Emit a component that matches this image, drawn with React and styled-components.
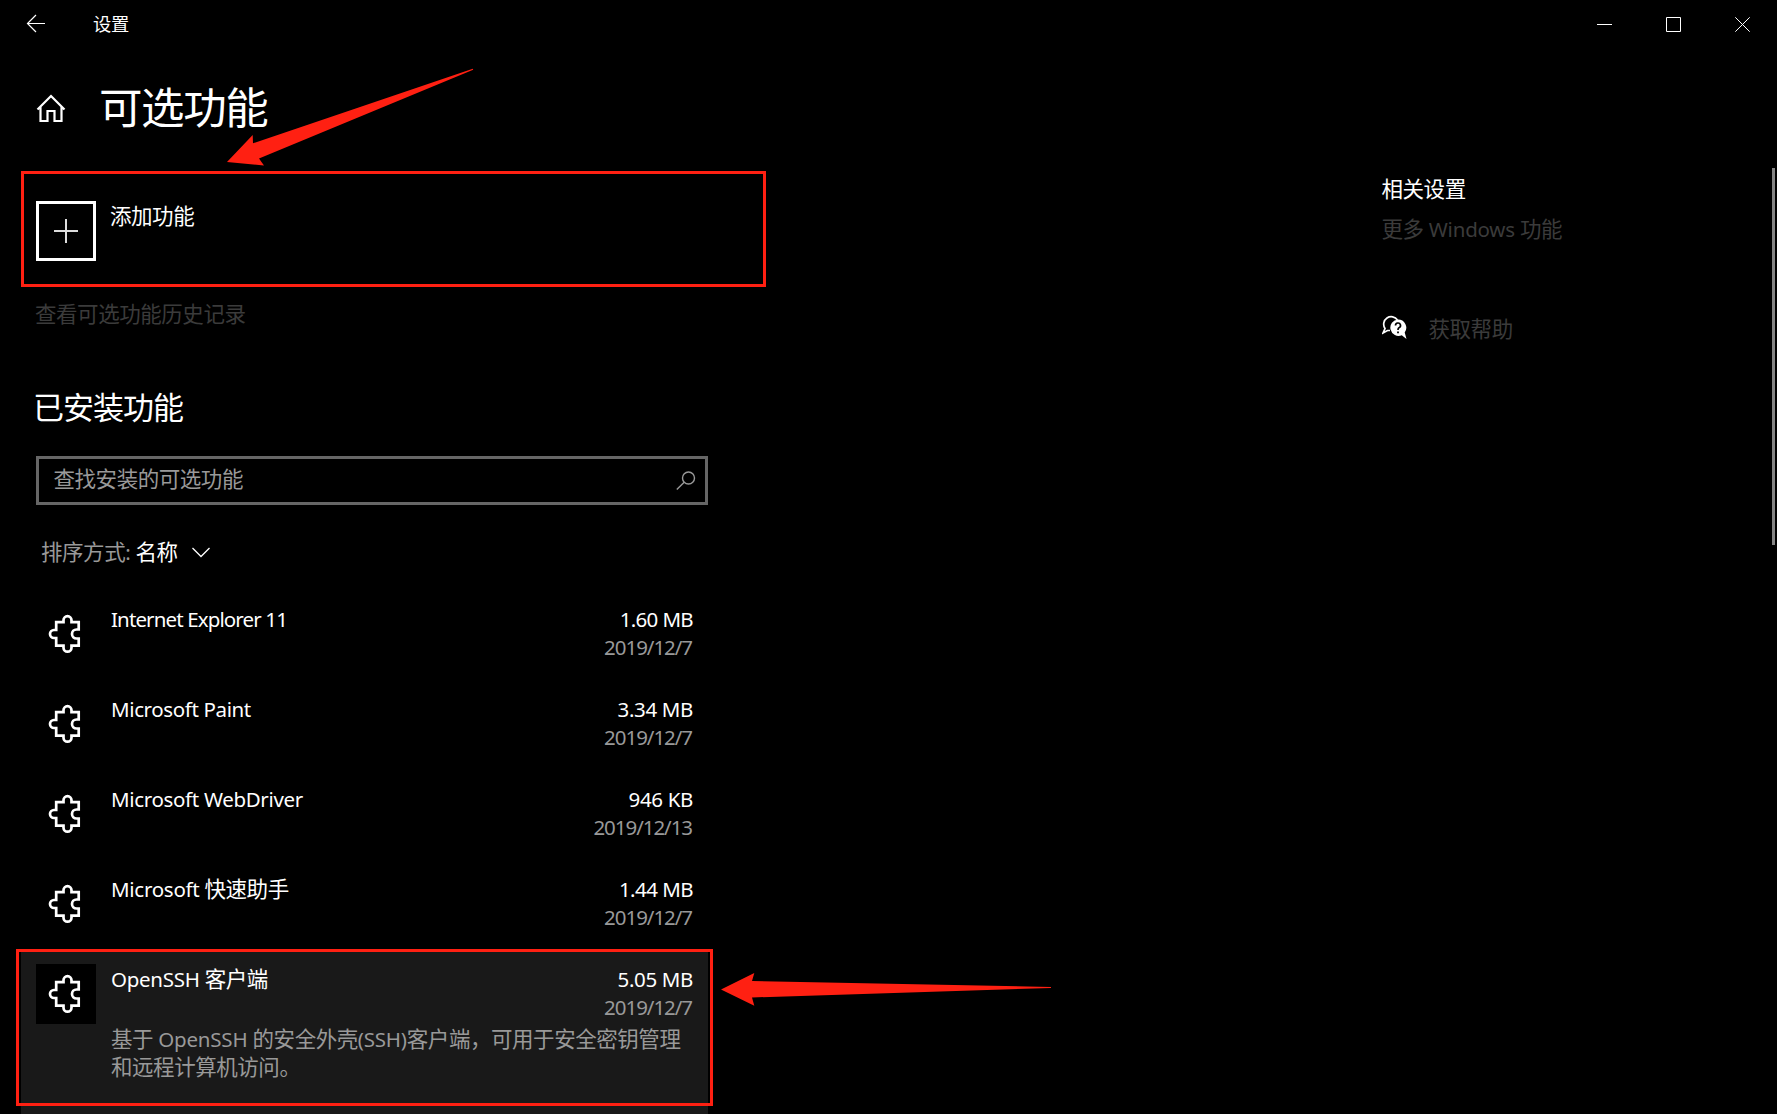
import React from "react";
import styled, { createGlobalStyle } from "styled-components";

const GlobalStyle = createGlobalStyle`
  * { box-sizing: border-box; }
  html, body { margin: 0; background: #000; overflow: hidden; }
  body {
    font-family: "Noto Sans", "Noto Sans CJK SC", sans-serif;
    font-size: 21.5px;
    letter-spacing: -0.45px;
    line-height: 28px;
    color: #fff;
  }
`;

const Window = styled.div`
  position: relative;
  width: 1777px;
  height: 1114px;
  overflow: hidden;
  background: #000;
`;

const TitleBar = styled.header`
  display: flex;
  align-items: center;
  height: 48px;
  padding-left: 26px;
`;

const AppName = styled.span`
  flex: 1;
  margin-left: 47px;
  font-size: 18.3px;
  letter-spacing: -0.2px;
`;

const CaptionButton = styled.button`
  display: flex;
  align-items: center;
  justify-content: center;
  width: 69px;
  height: 48px;
  padding: 0;
  border: 0;
  background: none;
`;

const Header = styled.div`
  display: flex;
  align-items: center;
  height: 120px;
  padding: 1px 0 0 36px;
`;

const PageTitle = styled.h1`
  margin: -4px 0 0 32px;
  font-size: 43.5px;
  font-weight: 400;
  letter-spacing: -1.4px;
  line-height: 56px;
`;

const Columns = styled.main`
  display: flex;
  align-items: flex-start;
  height: 946px;
`;

const Content = styled.section`
  width: 766px;
  padding-left: 21px;
`;

const Related = styled.aside`
  display: flex;
  flex-direction: column;
  flex: 1;
  margin-left: 615.5px;
  padding-top: 7px;
`;

const RelatedTitle = styled.h2`
  margin: 0 0 12px;
  font-size: 21.5px;
  font-weight: 400;
  line-height: 28px;
`;

const Link = styled.a`
  color: #3b3b3b;
`;

const HelpRow = styled.div`
  display: flex;
  align-items: flex-start;
  gap: 22px;
  margin: 72px 0 0;
`;

const ScrollThumb = styled.div`
  width: 3px;
  height: 377px;
  margin-right: 2px;
  background: #858585;
`;

const AddFeature = styled.div`
  display: flex;
  gap: 14px;
  width: 745px;
  height: 116px;
  margin-top: 3px;
  padding: 27px 12px;
  border: 3px solid #ff2012;
`;

const AddTile = styled.div`
  display: flex;
  align-items: center;
  justify-content: center;
  width: 60px;
  height: 60px;
  border: 3px solid #fff;
`;

const AddLabel = styled.span`
  margin-top: 1px;
`;

const HistoryLink = styled(Link)`
  display: block;
  margin: 13px 0 0 14px;
`;

const SectionTitle = styled.h2`
  margin: 59px 0 0 12px;
  font-size: 31px;
  font-weight: 400;
  letter-spacing: -1px;
  line-height: 40px;
`;

const SearchBox = styled.div`
  display: flex;
  justify-content: space-between;
  width: 672px;
  height: 49px;
  margin: 29px 0 0 15px;
  padding: 6px 9px 0 14.5px;
  border: 3px solid #666;
  color: #999;

  svg {
    margin-top: 6px;
  }
`;

const SortRow = styled.div`
  display: flex;
  align-items: center;
  height: 28px;
  margin: 33px 0 23px 20px;
  color: #999;
`;

const SortValue = styled.span`
  margin: 0 14px 0 5px;
  color: #fff;
`;

const Row = styled.div`
  display: flex;
  gap: 15px;
  width: 687px;
  height: ${(p) => (p.$selected ? "180px" : "90px")};
  padding: 15px;
  background: ${(p) => (p.$selected ? "#191919" : "transparent")};
`;

const IconTile = styled.div`
  flex: none;
  width: 60px;
  height: 60px;
  background: #000;
`;

const Details = styled.div`
  flex: 1;
  padding-top: 1px;
`;

const Line = styled.div`
  display: flex;
  justify-content: ${(p) => (p.$end ? "flex-end" : "space-between")};
  height: 28px;
  padding-right: ${(p) => (p.$end ? "1px" : "0")};
  color: ${(p) => (p.$dim ? "#999" : "#fff")};
  white-space: pre;
`;

const Description = styled.div`
  margin-top: 4px;
`;

const LatinRun = styled.span`
  font-size: 20.5px;
  letter-spacing: ${(p) => p.$track}px;
`;

const SelectionFrame = styled.div`
  position: absolute;
  left: 16px;
  top: 949px;
  width: 697px;
  height: 157px;
  border: 3px solid #ff2012;
`;

const Annotations = styled.svg`
  position: absolute;
  left: 0;
  top: 0;
  pointer-events: none;
`;

const features = [
  { name: "Internet Explorer 11", track: -0.87, size: "1.60 MB", sizeTrack: -0.65, date: "2019/12/7" },
  { name: "Microsoft Paint", track: -0.37, size: "3.34 MB", date: "2019/12/7" },
  { name: "Microsoft WebDriver", track: -0.33, size: "946 KB", date: "2019/12/13" },
  { name: "Microsoft 快速助手", track: -0.27, size: "1.44 MB", sizeTrack: -0.55, date: "2019/12/7" },
  {
    name: "OpenSSH 客户端",
    track: -0.27,
    size: "5.05 MB",
    date: "2019/12/7",
    selected: true,
    description: ["基于 OpenSSH 的安全外壳(SSH)客户端，可用于安全密钥管理", "和远程计算机访问。"],
  },
];

// Latin runs are set slightly smaller than the Chinese text around them.
function Mixed({ children, track = -0.2 }) {
  return (
    <span>
      {children.split(/([\x20-\x7e]+)/).filter(Boolean).map((part, i) =>
        /^[\x20-\x7e]/.test(part) ? (
          <LatinRun key={i} $track={track}>{part}</LatinRun>
        ) : (
          part
        )
      )}
    </span>
  );
}

function PuzzleIcon() {
  return (
    <svg width="60" height="60" viewBox="0 0 60 60" fill="none" stroke="#fff" strokeWidth="2.7">
      <path d="M20.200 18.200H27.500V16.200a4 4 0 0 1 8 0V18.200H42.700V25.500H40.500a4.500 4.500 0 0 0 0 9H42.700V41.700H35.500V43.700a4 4 0 0 1-8 0V41.700H20.200V34H18a4 4 0 0 1 0-8H20.200Z" />
    </svg>
  );
}

function BackIcon() {
  return (
    <svg width="20" height="20" viewBox="0 0 20 20" fill="none" stroke="#fff" strokeWidth="1.2">
      <path d="M19 9.500H1.500M10 1L1.500 9.500L10 18" />
    </svg>
  );
}

function HomeIcon() {
  return (
    <svg width="31" height="30" viewBox="0 0 31 30" fill="none" stroke="#fff" strokeWidth="2.200">
      <path d="M1.500 15.500L15 2L28.500 15.500M4.500 13V27H11.500V17H18.500V27H25.500V13" />
    </svg>
  );
}

function SearchIcon() {
  return (
    <svg width="20" height="20" viewBox="0 0 20 20" fill="none" stroke="#999" strokeWidth="1.400">
      <circle cx="12.500" cy="7" r="6" />
      <path d="M8.200 11.200L0.800 18.600" />
    </svg>
  );
}

function ChevronIcon() {
  return (
    <svg width="18" height="11" viewBox="0 0 18 11" fill="none" stroke="#fff" strokeWidth="1.300">
      <path d="M0.500 1L9 9.500L17.500 1" />
    </svg>
  );
}

function HelpIcon() {
  return (
    <svg width="25" height="25" viewBox="0 0 25 25">
      <path d="M8 15.500H5.500L1 18L3 13.500A7.300 7.300 0 1 1 15.500 5" fill="none" stroke="#fff" strokeWidth="1.700" />
      <path d="M16 4.500a8.200 8.200 0 1 0 3.800 15.700L24.500 24L22.700 17.500A8.200 8.200 0 0 0 16 4.500Z" fill="#fff" />
      <path d="M13.500 10.500a2.500 2.500 0 1 1 3.500 2.300Q16 13.300 16 15" fill="none" stroke="#000" strokeWidth="1.700" />
      <path d="M15.100 16.500h1.800v1.800h-1.800z" />
    </svg>
  );
}

function Caption({ d, label }) {
  return (
    <CaptionButton aria-label={label}>
      <svg width="15" height="15" viewBox="0 0 15 15" fill="none" stroke="#fff">
        <path d={d} />
      </svg>
    </CaptionButton>
  );
}

export default function App() {
  return (
    <>
      <GlobalStyle />
      <Window>
        <TitleBar>
          <BackIcon />
          <AppName>设置</AppName>
          <Caption label="最小化" d="M0 7.500H15" />
          <Caption label="最大化" d="M.5 .5H14.500V14.500H.5Z" />
          <Caption label="关闭" d="M.3 .3L14.700 14.700M14.700 .3L.3 14.700" />
        </TitleBar>
        <Header>
          <HomeIcon />
          <PageTitle>可选功能</PageTitle>
        </Header>
        <Columns>
          <Content>
            <AddFeature>
              <AddTile>
                <svg width="24" height="24" viewBox="0 0 24 24" stroke="#ddd" strokeWidth="2">
                  <path d="M0 12H24M12 0V24" />
                </svg>
              </AddTile>
              <AddLabel>添加功能</AddLabel>
            </AddFeature>
            <HistoryLink>查看可选功能历史记录</HistoryLink>
            <SectionTitle>已安装功能</SectionTitle>
            <SearchBox>
              <span>查找安装的可选功能</span>
              <SearchIcon />
            </SearchBox>
            <SortRow>
              <Mixed>排序方式:</Mixed>
              <SortValue>名称</SortValue>
              <ChevronIcon />
            </SortRow>
            {features.map((f) => (
              <Row key={f.name} $selected={f.selected}>
                <IconTile>
                  <PuzzleIcon />
                </IconTile>
                <Details>
                  <Line>
                    <Mixed track={f.track}>{f.name}</Mixed>
                    <Mixed track={f.sizeTrack ?? -0.35}>{f.size}</Mixed>
                  </Line>
                  <Line $end $dim>
                    <Mixed track={-1.05}>{f.date}</Mixed>
                  </Line>
                  {f.description && (
                    <Description>
                      {f.description.map((text) => (
                        <Line key={text} $dim>
                          <Mixed>{text}</Mixed>
                        </Line>
                      ))}
                    </Description>
                  )}
                </Details>
              </Row>
            ))}
          </Content>
          <Related>
            <RelatedTitle>相关设置</RelatedTitle>
            <Link>
              <Mixed>更多 Windows 功能</Mixed>
            </Link>
            <HelpRow>
              <HelpIcon />
              <Link>获取帮助</Link>
            </HelpRow>
          </Related>
          <ScrollThumb />
        </Columns>
        <SelectionFrame />
        <Annotations width="1777" height="1114" fill="#ff2012">
          <path d="M227 162L252.700 135L253 143.300L472.800 68.800L473.200 69.800L259 158.500L264 165.500Z" />
          <path d="M721 989.500L754.300 973L752 981L1051 987V988L752 997.500L754.300 1005.700Z" />
        </Annotations>
      </Window>
    </>
  );
}
